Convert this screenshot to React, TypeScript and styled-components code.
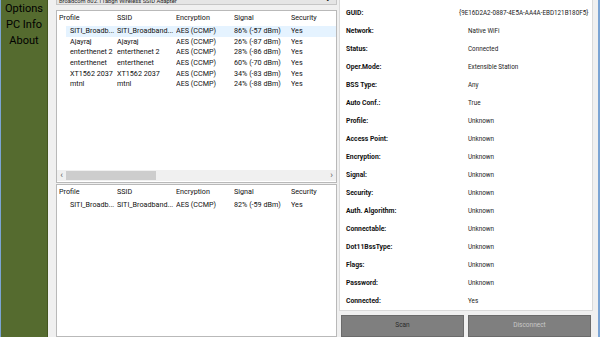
import React from "react";
import styled, { createGlobalStyle } from "styled-components";

const GlobalStyle = createGlobalStyle`
  html, body {
    margin: 0;
    padding: 0;
    background: #f0f0f0;
  }
  body {
    font-family: Roboto, "Noto Sans", sans-serif;
    color: #000;
  }
`;

const networks = [
  { profile: "SITI_Broadb...", ssid: "SITI_Broadband...", enc: "AES (CCMP)", signal: "86% (-57 dBm)", sec: "Yes", selected: true },
  { profile: "Ajayraj", ssid: "Ajayraj", enc: "AES (CCMP)", signal: "26% (-87 dBm)", sec: "Yes" },
  { profile: "enterthenet 2", ssid: "enterthenet 2", enc: "AES (CCMP)", signal: "28% (-86 dBm)", sec: "Yes" },
  { profile: "enterthenet", ssid: "enterthenet", enc: "AES (CCMP)", signal: "60% (-70 dBm)", sec: "Yes" },
  { profile: "XT1562 2037", ssid: "XT1562 2037", enc: "AES (CCMP)", signal: "34% (-83 dBm)", sec: "Yes" },
  { profile: "mtnl", ssid: "mtnl", enc: "AES (CCMP)", signal: "24% (-88 dBm)", sec: "Yes" },
];

const connected = [
  { profile: "SITI_Broadb...", ssid: "SITI_Broadband...", enc: "AES (CCMP)", signal: "82% (-59 dBm)", sec: "Yes" },
];

const details = [
  ["GUID:", "{9E16D2A2-0887-4E5A-AA4A-EBD121B180F5}"],
  ["Network:", "Native WiFi"],
  ["Status:", "Connected"],
  ["Oper.Mode:", "Extensible Station"],
  ["BSS Type:", "Any"],
  ["Auto Conf.:", "True"],
  ["Profile:", "Unknown"],
  ["Access Point:", "Unknown"],
  ["Encryption:", "Unknown"],
  ["Signal:", "Unknown"],
  ["Security:", "Unknown"],
  ["Auth. Algorithm:", "Unknown"],
  ["Connectable:", "Unknown"],
  ["Dot11BssType:", "Unknown"],
  ["Flags:", "Unknown"],
  ["Password:", "Unknown"],
  ["Connected:", "Yes"],
];

type Net = { profile: string; ssid: string; enc: string; signal: string; sec: string; selected?: boolean };

const NetworkList = ({ items, scroll }: { items: Net[]; scroll?: boolean }) => (
  <ListBox>
    <ListBody>
      <HeaderRow>
        <Cell>Profile</Cell>
        <Cell>SSID</Cell>
        <Cell>Encryption</Cell>
        <Cell>Signal</Cell>
        <Cell>Security</Cell>
      </HeaderRow>
      {items.map((n, i) => (
        <ItemRow key={i} $selected={n.selected}>
          <Cell $first>{n.profile}</Cell>
          <Cell>{n.ssid}</Cell>
          <Cell>{n.enc}</Cell>
          <Cell>{n.signal}</Cell>
          <Cell>{n.sec}</Cell>
        </ItemRow>
      ))}
    </ListBody>
    {scroll && (
      <HScroll>
        <ScrollArrow>‹</ScrollArrow>
        <Track>
          <Thumb />
        </Track>
        <ScrollArrow>›</ScrollArrow>
      </HScroll>
    )}
  </ListBox>
);

const App = () => {
  return (
    <Window>
      <GlobalStyle />
      <Sidebar>
        <NavItem>Options</NavItem>
        <NavItem>PC Info</NavItem>
        <NavItem>About</NavItem>
      </Sidebar>
      <Main>
        <LeftColumn>
          <Combo>
            <ComboText>Broadcom 802.11abgn Wireless SSID Adapter</ComboText>
            <ComboArrow>⌄</ComboArrow>
          </Combo>
          <TopList>
            <NetworkList items={networks} scroll />
          </TopList>
          <BottomList>
            <NetworkList items={connected} />
          </BottomList>
        </LeftColumn>
        <RightColumn>
          <DetailsPanel>
            {details.map(([label, value], i) => (
              <DetailRow key={i}>
                <Label>{label}</Label>
                <Value $shift={i === 0}>{value}</Value>
              </DetailRow>
            ))}
          </DetailsPanel>
          <ButtonRow>
            <ActionButton>Scan</ActionButton>
            <ActionButton $disabled>Disconnect</ActionButton>
          </ButtonRow>
        </RightColumn>
      </Main>
    </Window>
  );
};

export default App;

const Window = styled.div`
  width: 600px;
  height: 337px;
  box-sizing: border-box;
  display: flex;
  overflow: hidden;
  border-left: 1px solid #7ba4d4;
  border-right: 2px solid #7ba4d4;
  background: #f0f0f0;
`;

const Sidebar = styled.div`
  width: 46px;
  flex-shrink: 0;
  background: #556b2f;
  border-right: 1px solid #44561f;
  display: flex;
  flex-direction: column;
  align-items: center;
  padding-top: 1px;
`;

const NavItem = styled.div`
  font-family: Roboto, "Noto Sans", sans-serif;
  font-size: 11px;
  line-height: 16px;
  color: #000;
  cursor: pointer;
`;

const Main = styled.div`
  flex: 1;
  display: flex;
  padding-left: 8px;
  padding-right: 5px;
  gap: 2px;
  min-width: 0;
`;

const LeftColumn = styled.div`
  width: 281px;
  flex-shrink: 0;
  display: flex;
  flex-direction: column;
`;

const Combo = styled.div`
  height: 5px;
  box-sizing: border-box;
  background: #e5e5e5;
  border: 1px solid #c6c6c6;
  border-top: none;
  display: flex;
  align-items: flex-end;
  justify-content: space-between;
  overflow: hidden;
  padding: 0 4px 0 2px;
  font-size: 5.8px;
`;

const ComboText = styled.span`
  line-height: 8px;
  margin-bottom: -1px;
  color: #222;
`;

const ComboArrow = styled.span`
  line-height: 10px;
  margin-bottom: 1px;
  font-size: 9px;
`;

const TopList = styled.div`
  margin-top: 5px;
  height: 173px;
  display: flex;
`;

const BottomList = styled.div`
  margin-top: 1px;
  flex: 1;
  display: flex;
`;

const ListBox = styled.div`
  flex: 1;
  background: #fff;
  border: 1px solid #b9b9b9;
  display: flex;
  flex-direction: column;
  overflow: hidden;
`;

const ListBody = styled.div`
  flex: 1;
  font-size: 7.2px;
  line-height: 10.7px;
  color: #111;
`;

const HeaderRow = styled.div`
  display: grid;
  grid-template-columns: 58px 59px 58px 57px 1fr;
  padding-left: 2px;
  height: 14px;
  align-items: center;
  margin-bottom: 1px;
`;

const ItemRow = styled.div<{ $selected?: boolean }>`
  display: grid;
  grid-template-columns: 51px 59px 58px 57px 1fr;
  margin-left: 9px;
  height: 10.7px;
  background: ${(p) => (p.$selected ? "#e5f3ff" : "transparent")};
`;

const Cell = styled.div<{ $first?: boolean }>`
  white-space: nowrap;
  overflow: hidden;
  padding-left: ${(p) => (p.$first ? "4px" : "0")};
`;

const HScroll = styled.div`
  height: 11px;
  margin-bottom: 1px;
  display: flex;
  align-items: stretch;
  background: #f0f0f0;
`;

const ScrollArrow = styled.div`
  width: 9px;
  font-size: 9px;
  line-height: 10px;
  color: #606060;
  text-align: center;
`;

const Track = styled.div`
  flex: 1;
  display: flex;
  align-items: center;
`;

const Thumb = styled.div`
  width: 90px;
  height: 9px;
  background: #cdcdcd;
`;

const RightColumn = styled.div`
  flex: 1;
  display: flex;
  flex-direction: column;
  min-width: 0;
`;

const DetailsPanel = styled.div`
  height: 314px;
  box-sizing: border-box;
  background: #fff;
  border: 1px solid #dadada;
  border-top: none;
  padding: 4px 0 0 6px;
  font-size: 6.8px;
`;

const DetailRow = styled.div`
  display: grid;
  grid-template-columns: 122px 1fr;
  height: 18px;
  align-items: center;
`;

const Label = styled.div`
  font-weight: 700;
  color: #111;
  white-space: nowrap;
`;

const Value = styled.div<{ $shift?: boolean }>`
  font-size: 6.3px;
  color: #222;
  white-space: nowrap;
  margin-left: ${(p) => (p.$shift ? "-9px" : "0")};
`;

const ButtonRow = styled.div`
  margin-top: 4px;
  padding: 0 2px;
  display: grid;
  grid-template-columns: 1fr 1fr;
  gap: 4px;
`;

const ActionButton = styled.button<{ $disabled?: boolean }>`
  height: 22px;
  background: #7f7f7f;
  border: 1px solid #6b6b6b;
  font-family: Roboto, sans-serif;
  font-size: 6.5px;
  color: ${(p) => (p.$disabled ? "#c9c9c9" : "#2a2a2a")};
  padding: 0;
  padding-bottom: 2px;
  cursor: pointer;
`;
